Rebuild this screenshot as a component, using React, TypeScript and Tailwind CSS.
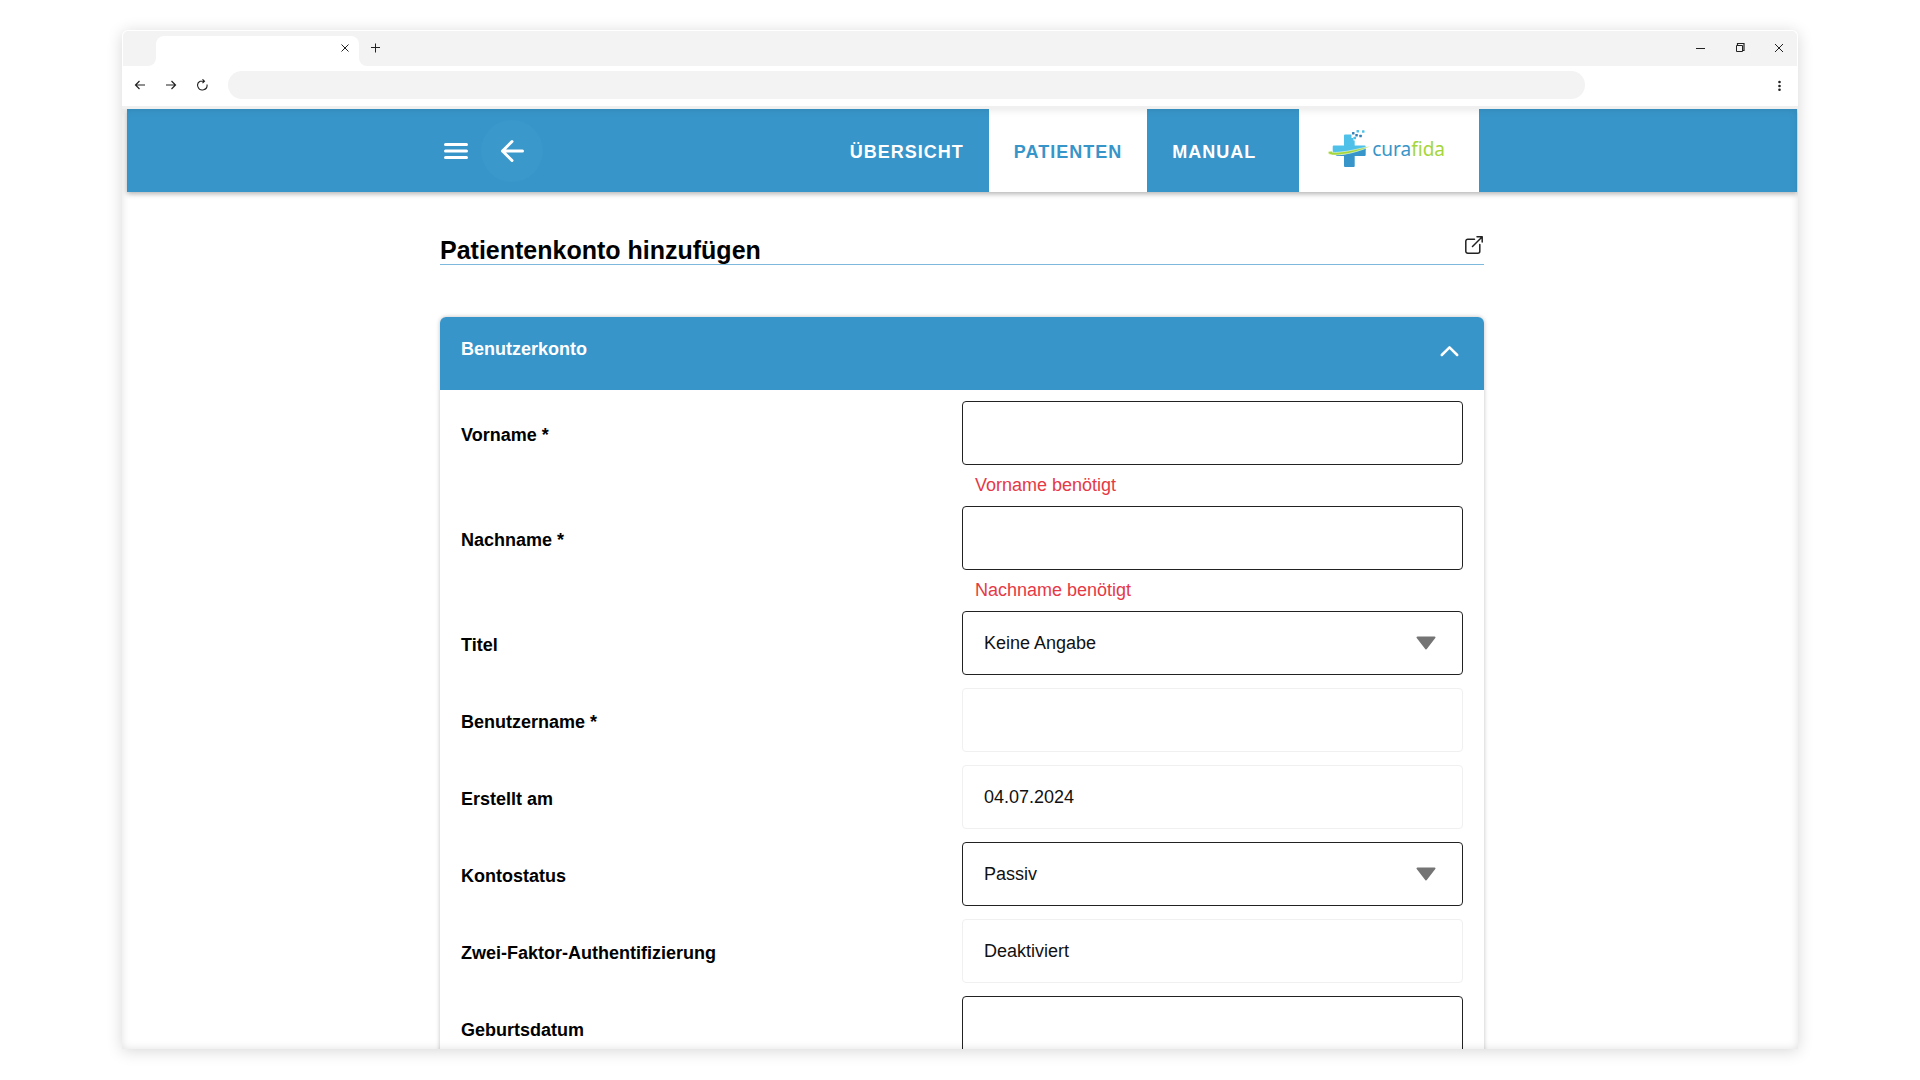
import { useId, type ReactNode } from "react"
import clsx from "clsx"

const fields = [
  { label: "Vorname *", type: "text", value: "", error: "Vorname benötigt" },
  { label: "Nachname *", type: "text", value: "", error: "Nachname benötigt" },
  { label: "Titel", type: "select", value: "Keine Angabe" },
  { label: "Benutzername *", type: "text", value: "", disabled: true },
  { label: "Erstellt am", type: "text", value: "04.07.2024", disabled: true },
  { label: "Kontostatus", type: "select", value: "Passiv" },
  { label: "Zwei-Faktor-Authentifizierung", type: "text", value: "Deaktiviert", disabled: true },
  { label: "Geburtsdatum", type: "text", value: "" },
]

const navItems = [
  { label: "Übersicht", active: false },
  { label: "Patienten", active: true },
  { label: "Manual", active: false },
]

function ChromeButton({ label, className, children }: { label: string; className?: string; children: ReactNode }) {
  return (
    <button type="button" aria-label={label} className={clsx("flex h-7 shrink-0 items-center justify-center", className)}>
      <svg width="12" height="12" viewBox="0 0 12 12" fill="none" stroke="#222" strokeWidth="1">
        {children}
      </svg>
    </button>
  )
}

function TabStrip() {
  return (
    <div className="flex h-9 items-end rounded-t-md border border-b-0 border-white bg-[#f3f3f3]">
      <div className="ml-[25px] h-2 w-2 bg-white">
        <div className="h-2 w-2 rounded-br-lg bg-[#f3f3f3]" />
      </div>
      <div className="flex h-[30px] w-[203px] items-start justify-end rounded-t-lg bg-white">
        <ChromeButton label="Tab schließen" className="w-7">
          <path d="M2.500 .5l7 7M9.500 .5l-7 7" />
        </ChromeButton>
      </div>
      <div className="h-2 w-2 bg-white">
        <div className="h-2 w-2 rounded-bl-lg bg-[#f3f3f3]" />
      </div>
      <div className="flex flex-1 self-start pt-[3px]">
        <ChromeButton label="Neuer Tab" className="w-4">
          <path d="M6.500 1.500v9M2 5.500h9" />
        </ChromeButton>
        <div className="ml-auto flex">
          <ChromeButton label="Minimieren" className="w-10">
            <path d="M1 6.500h9" />
          </ChromeButton>
          <ChromeButton label="Verkleinern" className="w-10">
            <path d="M1.500 3.500h6v6h-6z" />
            <path d="M2.500 3V1.500h6.500V8.500H8" strokeWidth="1.200" />
          </ChromeButton>
          <ChromeButton label="Fenster schließen" className="w-9">
            <path d="M2 2l8 8M10 2l-8 8" />
          </ChromeButton>
        </div>
      </div>
    </div>
  )
}

function Toolbar() {
  return (
    <div className="flex h-[43px] items-start border-b-[3px] border-[#f0f0f0] bg-white pt-[5px] pl-0.5">
      <ChromeButton label="Zurück" className="w-[31px]">
        <path d="M11 6H1.500M5.500 2l-4 4 4 4" strokeWidth="1.200" />
      </ChromeButton>
      <ChromeButton label="Vorwärts" className="w-[31px]">
        <path d="M1 6h9.500M6.500 2l4 4-4 4" strokeWidth="1.200" />
      </ChromeButton>
      <ChromeButton label="Neu laden" className="w-[31px]">
        <path d="M4 2.200A4.700 4.700 0 1 0 11 5.500M4 2.200h4.500M6.500 .3l2 1.900-2 2" strokeWidth="1.100" />
      </ChromeButton>
      <input aria-label="Adresse" className="ml-[11px] h-7 min-w-0 flex-1 rounded-full bg-[#f3f3f3] px-4 text-sm outline-none" />
      <ChromeButton label="Menü" className="ml-[173px] w-10">
        <g fill="#222" stroke="none">
          <circle cx="7.500" cy="3" r="1.300" />
          <circle cx="7.500" cy="7" r="1.300" />
          <circle cx="7.500" cy="10.700" r="1.300" />
        </g>
      </ChromeButton>
    </div>
  )
}

function Logo() {
  return (
    <a href="#" aria-label="curafida" className="flex items-center gap-px bg-white pr-[34px] pb-1 pl-[29px]">
      <svg className="shrink-0" width="43" height="38" viewBox="0 0 43 38" fill="none">
        <path d="M17 4.500h6.500v3.500h2v2.500h1.200V15.500h10a1 1 0 0 1 1 1V20L24 24H4.700v-7.500a1 1 0 0 1 1-1H16V5.500a1 1 0 0 1 1-1z" fill="#4fc1e9" />
        <path d="M6.500 24.500c10 1 20-1.500 31.200-5.500V25a1 1 0 0 1-1 1h-10v10a1 1 0 0 1-1 1H17a1 1 0 0 1-1-1V26H9z" fill="#3895c9" />
        <path d="M.5 21.500c-1.500 3.500 5 4 12 3.200C24 23.500 34 20 43 16 33 18 22 21.500 10 22.300c-5 .3-7 0-5.500-1.300z" fill="#a5d63a" stroke="#fff" strokeWidth=".5" />
        <g fill="#4fc1e9">
          <rect x="28.500" y="0" width="2.500" height="2.500" rx=".5" />
          <rect x="34" y=".3" width="2.500" height="2.500" rx=".5" />
          <rect x="25.500" y="6.700" width="2.500" height="2.500" rx=".5" />
        </g>
        <g fill="#3480b8">
          <rect x="24" y="2" width="2.500" height="2.500" rx=".5" />
          <rect x="27.300" y="4" width="2.500" height="2.500" rx=".5" />
          <rect x="31.300" y="4.800" width="2.500" height="2.500" rx=".5" />
        </g>
      </svg>
      <span className="font-['Noto_Sans','Open_Sans',sans-serif] text-[19px] leading-6 text-[#3895c9]">
        cura<span className="text-[#a5d63a]">fida</span>
      </span>
    </a>
  )
}

function Header() {
  return (
    <header className="bg-[#3895c9] shadow-[0_2px_5px_rgba(0,0,0,0.3)]">
      <div className="mx-auto flex h-[83px] max-w-[1044px] items-stretch pr-[5px]">
        <div className="flex items-center">
          <button type="button" aria-label="Menü öffnen" className="ml-1">
            <svg width="24" height="18" viewBox="0 0 24 18" stroke="#fff" strokeWidth="3" strokeLinecap="round">
              <path d="M1.500 2.500h21M1.500 9h21M1.500 15.500h21" />
            </svg>
          </button>
          <button type="button" aria-label="Zurück" className="ml-[13px] flex size-[62px] items-center justify-center rounded-full bg-[#3a98cb]">
            <svg width="24" height="24" viewBox="0 0 24 24" fill="none" stroke="#fff" strokeWidth="3" strokeLinecap="round" strokeLinejoin="round">
              <path d="M22.500 12H2.500M12 2.500L2.500 12l9.500 9.500" />
            </svg>
          </button>
        </div>
        <nav className="mr-[18px] ml-auto flex">
          {navItems.map((item) => (
            <a
              key={item.label}
              href="#"
              className={clsx(
                "flex items-center px-[25px] pt-1 text-[18px] font-bold tracking-[1px] uppercase",
                item.active ? "bg-white text-[#3895c9]" : "text-white"
              )}
            >
              {item.label}
            </a>
          ))}
        </nav>
        <Logo />
      </div>
    </header>
  )
}

function Field({ label, type, value, error, disabled }: (typeof fields)[number]) {
  const id = useId()
  const box = clsx(
    "block h-16 w-full appearance-none rounded-[4px] border bg-white px-[21px] text-[18px] text-[#111] opacity-100 outline-none",
    disabled ? "border-[#f0f0f0]" : "border-[#222]"
  )

  return (
    <div className={clsx("grid grid-cols-2 items-start", !error && "pb-[13px]")}>
      <label htmlFor={id} className="pt-[22px] text-[18px] leading-6 font-bold">
        {label}
      </label>
      <div>
        {type === "select" ? (
          <div className="relative">
            <select id={id} className={box} defaultValue={value}>
              <option>{value}</option>
            </select>
            <svg className="pointer-events-none absolute top-[25px] right-[27px]" width="20" height="14" viewBox="0 0 20 14">
              <path d="M1.500 1.500h17L10 12.500z" fill="#747474" stroke="#747474" strokeWidth="2" strokeLinejoin="round" />
            </svg>
          </div>
        ) : (
          <input id={id} type="text" className={box} defaultValue={value} disabled={disabled} />
        )}
        {error && <p className="px-[13px] text-[18px] leading-[41px] text-[#e63946]">{error}</p>}
      </div>
    </div>
  )
}

export default function App() {
  return (
    <div className="h-screen bg-white px-[122px] pt-[30px] pb-[31px] font-['Liberation_Sans',Arial,sans-serif] text-black">
      <div className="flex h-full flex-col overflow-hidden rounded-t-md bg-white shadow-[0_2px_16px_rgba(0,0,0,0.16)]">
        <TabStrip />
        <Toolbar />
        <div className="relative min-h-0 flex-1 overflow-hidden pr-px pl-[5px]">
          <Header />
          <main className="mx-auto max-w-[1044px]">
            <div className="mt-11 flex items-start justify-between border-b border-[#7db9dc]">
              <h1 className="text-[25px] leading-7 font-bold">Patientenkonto hinzufügen</h1>
              <button type="button" aria-label="In neuem Fenster öffnen" className="mr-px">
                <svg width="18" height="18" viewBox="0 0 18 18" fill="none" stroke="#222" strokeWidth="1.500" strokeLinecap="round" strokeLinejoin="round">
                  <path d="M9.500 3.200H2.800a2 2 0 0 0-2 2v10a2 2 0 0 0 2 2h10a2 2 0 0 0 2-2V8.500M12 .8h5.200V6M7.500 10.500l9.500-9.500" />
                </svg>
              </button>
            </div>
            <section className="mt-[52px] rounded-t-md shadow-[0_0_4px_rgba(0,0,0,0.25)]">
              <button type="button" className="flex h-[73px] w-full items-start justify-between rounded-t-md bg-[#3895c9] pt-5 pr-[25px] pl-[21px] text-white">
                <span className="text-[18px] leading-6 font-bold">Benutzerkonto</span>
                <svg width="19" height="28" viewBox="0 0 19 28" fill="none" stroke="#fff" strokeWidth="2.500" strokeLinecap="round" strokeLinejoin="round">
                  <path d="M1.800 18l7.700-7.700 7.700 7.700" />
                </svg>
              </button>
              <form className="px-[21px] pt-[11px]">
                {fields.map((field) => (
                  <Field key={field.label} {...field} />
                ))}
              </form>
            </section>
          </main>
          <div className="pointer-events-none absolute inset-0 shadow-[inset_0_0_8px_rgba(0,0,0,0.12)]" />
        </div>
      </div>
    </div>
  )
}
